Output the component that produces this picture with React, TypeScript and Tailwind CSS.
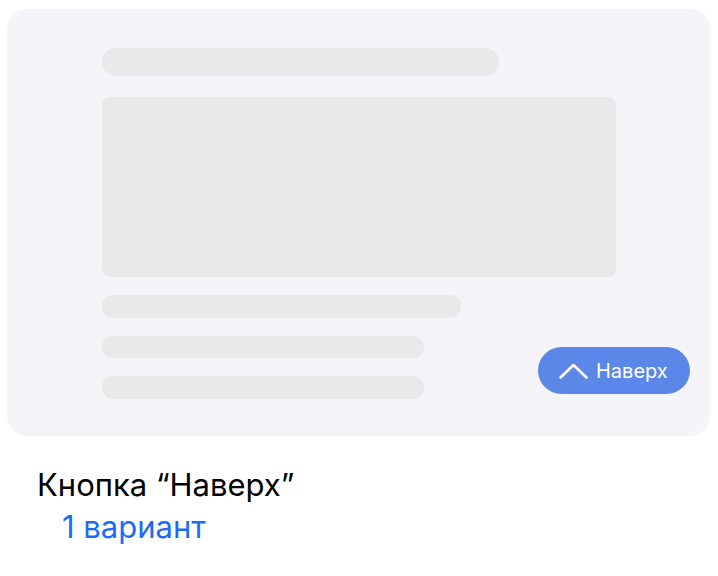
export default function App() {
    return (
        <div className="w-[718px] h-[576px] bg-white px-[7px] pt-[9px]" style={{ fontFamily: "Inter, 'Liberation Sans', sans-serif" }}>
            <div className="relative w-[703px] h-[427px] rounded-[20px] bg-[#f4f4f9] pl-[95px] pt-[39px] flex flex-col">
                <div className="w-[397px] h-[28px] rounded-full bg-[#e9e9ea]" />
                <div className="mt-[21px] w-[514px] h-[180px] rounded-[8px] bg-[#e9e9ea]" />
                <div className="mt-[18px] w-[359px] h-[23px] rounded-[11px] bg-[#e9e9ea]" />
                <div className="mt-[18px] w-[322px] h-[22px] rounded-[11px] bg-[#e9e9ea]" />
                <div className="mt-[18px] w-[322px] h-[23px] rounded-[11px] bg-[#e9e9ea]" />

                <button className="absolute right-[20px] bottom-[42px] w-[152px] h-[47px] rounded-full bg-[#5b88e8] flex items-center pl-[21px] gap-[8px] text-white text-[20px]">
                    <svg width="29" height="16" viewBox="0 0 29 16" fill="none">
                        <polyline points="1.5,14.5 14.5,2 27.5,14.5" stroke="white" strokeWidth="2.6" strokeLinecap="round" strokeLinejoin="round" />
                    </svg>
                    <span className="leading-none">Наверх</span>
                </button>
            </div>

            <div className="pl-[30px] pt-[28px]">
                <p className="text-[31px] leading-[42px] text-black">Кнопка “Наверх”</p>
                <p className="pl-[25px] text-[31px] leading-[42px] text-[#1a6bf5]">1 вариант</p>
            </div>
        </div>
    )
}
